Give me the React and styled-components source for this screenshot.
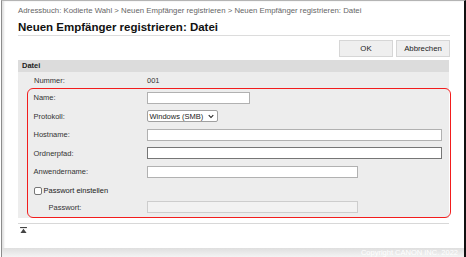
import React from "react";
import styled, { createGlobalStyle } from "styled-components";

const GlobalStyle = createGlobalStyle`
  html, body {
    margin: 0;
    padding: 0;
    background: #fff;
  }
  body {
    font-family: "Liberation Sans", Arial, sans-serif;
    color: #333;
  }
`;

const fields = [
  { label: "Name:", width: 103 },
  { label: "Protokoll:", select: "Windows (SMB)" },
  { label: "Hostname:", width: 295 },
  { label: "Ordnerpfad:", width: 295, dark: true },
  { label: "Anwendername:", width: 211 },
];

const App = () => {
  return (
    <>
      <GlobalStyle />
      <Window>
        <Page>
          <Breadcrumb>
            Adressbuch: Kodierte Wahl &gt; Neuen Empfänger registrieren &gt;
            Neuen Empfänger registrieren: Datei
          </Breadcrumb>
          <Title>Neuen Empfänger registrieren: Datei</Title>
          <Toolbar>
            <Button>OK</Button>
            <Button>Abbrechen</Button>
          </Toolbar>
          <Section>
            <SectionHeader>Datei</SectionHeader>
            <SectionBody>
              <PlainRow>
                <Label>Nummer:</Label>
                <Value>001</Value>
              </PlainRow>
              <Highlight>
                {fields.map((f) => (
                  <Row key={f.label}>
                    <Label>{f.label}</Label>
                    {f.select ? (
                      <Select>
                        <span>{f.select}</span>
                        <Chevron viewBox="0 0 8 6">
                          <path d="M1 1.2 L4 4.4 L7 1.2" />
                        </Chevron>
                      </Select>
                    ) : (
                      <Input $dark={f.dark} style={{ width: f.width }} />
                    )}
                  </Row>
                ))}
                <CheckRow>
                  <Checkbox />
                  <CheckText>Passwort einstellen</CheckText>
                </CheckRow>
                <Row>
                  <Label $indent>Passwort:</Label>
                  <Input disabled style={{ width: 211 }} />
                </Row>
              </Highlight>
            </SectionBody>
          </Section>
          <BottomBar>
            <TopIcon viewBox="0 0 8 7">
              <rect x="0" y="0" width="8" height="1.3" />
              <path d="M4 2 L7.6 7 L0.4 7 Z" />
            </TopIcon>
          </BottomBar>
        </Page>
        <Footer>Copyright CANON INC. 2022</Footer>
      </Window>
    </>
  );
};
export default App;

const Window = styled.div`
  box-sizing: border-box;
  width: 465px;
  height: 257px;
  margin-left: 1px;
  border-top: 1px solid #b4b4b4;
  border-left: 1px solid #8c8c8c;
  border-right: 2px solid #111;
  box-shadow: inset 2px 0 2px rgba(0, 0, 0, 0.12);
  display: flex;
  flex-direction: column;
`;

const Page = styled.div`
  flex: 1;
  padding: 5px 14px 0 16px;
  display: flex;
  flex-direction: column;
`;

const Breadcrumb = styled.div`
  font-size: 7.8px;
  line-height: 10px;
  color: #666;
  white-space: nowrap;
`;

const Title = styled.h1`
  margin: 4px 0 0;
  font-size: 11.5px;
  line-height: 14px;
  font-weight: bold;
  color: #111;
  padding-bottom: 1px;
  border-bottom: 1px solid #dcdcdc;
`;

const Toolbar = styled.div`
  display: flex;
  justify-content: flex-end;
  gap: 3px;
  margin-top: 4px;
`;

const Button = styled.button`
  box-sizing: border-box;
  width: 54px;
  height: 17px;
  padding: 0;
  border: 1px solid #d6d6d6;
  background: #efefef;
  font-family: "Liberation Sans", Arial, sans-serif;
  font-size: 7.8px;
  color: #222;
`;

const Section = styled.div`
  margin-top: 3px;
  margin-right: 1px;
`;

const SectionHeader = styled.div`
  height: 12px;
  line-height: 12px;
  background: #dcdcdc;
  padding-left: 4px;
  font-size: 7.5px;
  font-weight: bold;
  color: #222;
`;

const SectionBody = styled.div`
  background: #ededed;
  padding: 0 0 0 9px;
`;

const PlainRow = styled.div`
  display: flex;
  align-items: center;
  height: 16px;
  padding-left: 7px;
`;

const Label = styled.div`
  width: ${(p) => (p.$indent ? 98 : 113)}px;
  padding-left: ${(p) => (p.$indent ? 15 : 0)}px;
  font-size: 7.5px;
  color: #333;
  flex-shrink: 0;
`;

const Value = styled.div`
  font-size: 7.5px;
  color: #333;
`;

const Highlight = styled.div`
  box-sizing: border-box;
  margin-right: -2px;
  border: 1.5px solid #f21d1d;
  border-radius: 6px;
  padding: 2.5px 0 3.5px 5.5px;
  display: flex;
  flex-direction: column;
  gap: 6.5px;
`;

const Row = styled.div`
  display: flex;
  align-items: center;
  height: 12px;
`;

const Input = styled.input`
  box-sizing: border-box;
  height: 12px;
  padding: 0 2px;
  margin: 0;
  border: 1px solid ${(p) => (p.$dark ? "#767676" : "#b1b1b1")};
  background: #fff;
  &:disabled {
    background: #f2f2f2;
    border-color: #cdcdcd;
  }
`;

const Select = styled.div`
  box-sizing: border-box;
  width: 71px;
  height: 12px;
  border: 1px solid #a0a0a0;
  border-radius: 2px;
  background: #fff;
  display: flex;
  align-items: center;
  justify-content: space-between;
  padding: 0 3px 0 2px;
  font-size: 7.5px;
  color: #222;
`;

const Chevron = styled.svg`
  width: 6px;
  height: 5px;
  fill: none;
  stroke: #222;
  stroke-width: 1.5;
`;

const CheckRow = styled.div`
  display: flex;
  align-items: center;
  gap: 2px;
  height: 9px;
  margin-top: 2px;
  margin-bottom: -0.5px;
`;

const Checkbox = styled.span`
  box-sizing: border-box;
  width: 8px;
  height: 8px;
  border: 1px solid #777;
  border-radius: 2px;
  background: #fff;
`;

const CheckText = styled.span`
  font-size: 7.5px;
  color: #222;
`;

const BottomBar = styled.div`
  margin-top: 5px;
  margin-right: 1px;
  border-top: 1px solid #d8d8d8;
  padding: 3px 0 0 2px;
`;

const TopIcon = styled.svg`
  display: block;
  width: 7px;
  height: 6px;
  fill: #444;
`;

const Footer = styled.div`
  height: 9px;
  line-height: 9px;
  background: linear-gradient(#dedede, #f4f4f4);
  text-align: right;
  padding-right: 6px;
  font-size: 7.5px;
  color: #fff;
`;
